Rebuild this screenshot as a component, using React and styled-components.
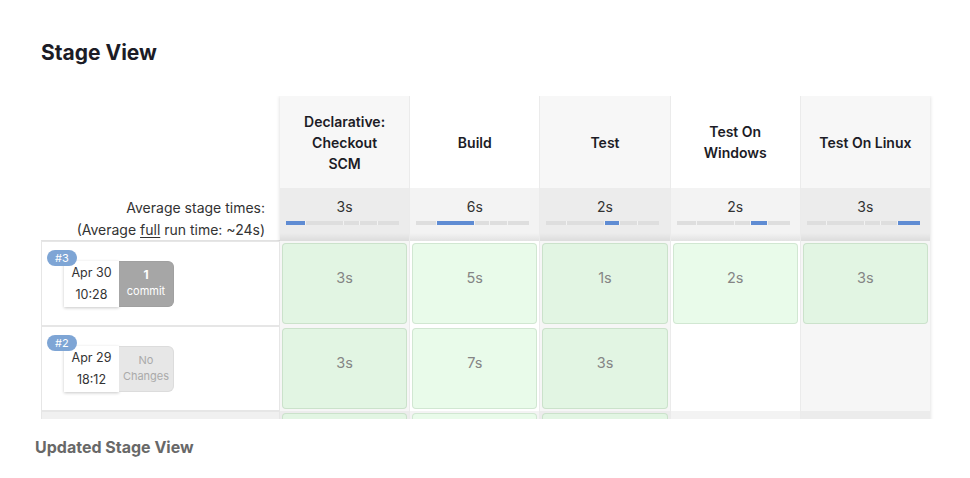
import React from "react";
import styled, { createGlobalStyle } from "styled-components";

const GlobalStyle = createGlobalStyle`
  body {
    margin: 0;
    background: #fff;
    font-family: Inter, "Noto Sans", sans-serif;
    color: #333;
  }
`;

const Page = styled.div`
  padding: 40px 0 0 35px;
`;

const Title = styled.h1`
  margin: 0 0 0 6px;
  font-size: 21px;
  font-weight: 700;
  line-height: 25px;
  color: #1c1c26;
`;

const Clip = styled.div`
  margin: 31px 0 0 6px;
  width: 900px;
  height: 323px;
  overflow: hidden;
`;

const Table = styled.div`
  display: flex;
`;

const LeftCol = styled.div`
  width: 239px;
  display: flex;
  flex-direction: column;
`;

const LeftHead = styled.div`
  height: 92px;
`;

const AvgLabel = styled.div`
  height: 53px;
  box-sizing: border-box;
  border-bottom: 1px solid #e2e2e2;
  padding: 9px 15px 0 0;
  text-align: right;
  font-size: 14px;
  line-height: 21.5px;
  color: #333;

  u {
    text-underline-offset: 2px;
  }
`;

const BuildRow = styled.div`
  position: relative;
  height: 85px;
  box-sizing: border-box;
  border: 1px solid #e6e6e6;
  background: ${(p) => (p.$shade ? "#f0f0f0" : "#fff")};
  padding: 19px 0 0 22px;
`;

const Badge = styled.span`
  position: absolute;
  top: 8px;
  left: 5px;
  z-index: 1;
  height: 16px;
  padding: 0 8px;
  border-radius: 8px;
  background: #7ea5d5;
  color: #fff;
  font-size: 11px;
  line-height: 16px;
`;

const Changeset = styled.div`
  display: flex;
`;

const DateBox = styled.div`
  width: 55px;
  height: 46px;
  box-sizing: border-box;
  padding-top: 1px;
  background: #fff;
  box-shadow: 0 1px 3px rgba(0, 0, 0, 0.22);
  text-align: center;
  font-size: 12.5px;
  line-height: 22px;
  color: #333;
`;

const CommitBox = styled.div`
  width: 55px;
  height: 46px;
  box-sizing: border-box;
  padding-top: 5px;
  border-radius: 0 6px 6px 0;
  background: ${(p) => (p.$empty ? "#e7e7e7" : "#a6a6a6")};
  border: 1px solid ${(p) => (p.$empty ? "#dcdcdc" : "#a0a0a0")};
  border-left: none;
  color: ${(p) => (p.$empty ? "#aaa" : "#fff")};
  text-align: center;
  font-size: 11px;
  line-height: 16px;

  b {
    font-weight: 700;
    font-size: 12px;
  }
`;

const StagePanel = styled.div`
  width: 650px;
  display: grid;
  grid-template-columns: repeat(5, 1fr);
  grid-template-rows: 92px 53px repeat(3, 85px);
  column-gap: 1px;
  background: #ebebeb;
  box-shadow: 0 0 4px rgba(0, 0, 0, 0.16);
`;

const StageName = styled.div`
  display: flex;
  align-items: center;
  justify-content: center;
  padding: 0 17px;
  background: ${(p) => (p.$alt ? "#fff" : "#f7f7f7")};
  text-align: center;
  font-size: 14px;
  font-weight: 600;
  line-height: 21px;
  color: #1c1c26;
`;

const AvgCell = styled.div`
  box-sizing: border-box;
  padding-top: 10px;
  background: ${(p) =>
    p.$alt
      ? "linear-gradient(to bottom, #f3f3f3 85%, #e2e2e2 100%)"
      : "linear-gradient(to bottom, #ececec 85%, #dcdcdc 100%)"};
  text-align: center;
  font-size: 14px;
  line-height: 18px;
  color: #333;
`;

const Bar = styled.div`
  display: flex;
  gap: 1px;
  width: 113px;
  height: 4px;
  margin: 5px 0 0 6px;
  background: #f2f2f2;
`;

const Segment = styled.div`
  flex: ${(p) => p.$w} 0 0;
  background: ${(p) => (p.$on ? "#5f8cd3" : "#dedede")};
`;

const StageCell = styled.div`
  padding: 2px;
  background: ${(p) =>
    p.$shade ? (p.$alt ? "#f3f3f3" : "#ececec") : p.$alt ? "#fff" : "#f6f6f6"};
`;

const Result = styled.div`
  height: 81px;
  box-sizing: border-box;
  padding-top: 25px;
  border-radius: 4px;
  border: 1px solid rgba(0, 60, 0, 0.1);
  background: ${(p) => (p.$alt ? "#e9fbea" : "#e2f5e3")};
  text-align: center;
  font-size: 14.5px;
  line-height: 18px;
  color: #858585;
`;

const Caption = styled.h2`
  margin: 19px 0 0;
  font-size: 16px;
  font-weight: 700;
  line-height: 19px;
  color: #686868;
`;

const stages = ["Declarative: Checkout SCM", "Build", "Test", "Test On Windows", "Test On Linux"];
const averages = ["3s", "6s", "2s", "2s", "3s"];
const shares = [20, 38, 15, 17, 22];

// the third build is cut off by the frame, only its top edge shows
const builds = [
  { id: "#3", date: "Apr 30", time: "10:28", commits: 1, times: ["3s", "5s", "1s", "2s", "3s"] },
  { id: "#2", date: "Apr 29", time: "18:12", commits: 0, times: ["3s", "7s", "3s", null, null] },
  { id: "#1", hidden: true, times: ["", "", "", null, null], shade: true },
];

export default function App() {
  return (
    <>
      <GlobalStyle />
      <Page>
        <Title>Stage View</Title>
        <Clip>
          <Table>
            <LeftCol>
              <LeftHead />
              <AvgLabel>
                Average stage times:
                <br />
                (Average <u>full</u> run time: ~24s)
              </AvgLabel>
              {builds.map((b) => (
                <BuildRow key={b.id} $shade={b.shade}>
                  {!b.hidden && (
                    <>
                      <Badge>{b.id}</Badge>
                      <Changeset>
                        <DateBox>
                          {b.date}
                          <br />
                          {b.time}
                        </DateBox>
                        <CommitBox $empty={!b.commits}>
                          {b.commits ? (
                            <>
                              <b>{b.commits}</b>
                              <br />
                              commit
                            </>
                          ) : (
                            <>
                              No
                              <br />
                              Changes
                            </>
                          )}
                        </CommitBox>
                      </Changeset>
                    </>
                  )}
                </BuildRow>
              ))}
            </LeftCol>
            <StagePanel>
              {stages.map((s, i) => (
                <StageName key={s} $alt={i % 2 === 1}>
                  {s}
                </StageName>
              ))}
              {averages.map((a, i) => (
                <AvgCell key={i} $alt={i % 2 === 1}>
                  {a}
                  <Bar>
                    {shares.map((w, j) => (
                      <Segment key={j} $w={w} $on={j === i} />
                    ))}
                  </Bar>
                </AvgCell>
              ))}
              {builds.map((b) =>
                b.times.map((t, i) => (
                  <StageCell key={b.id + i} $alt={i % 2 === 1} $shade={b.shade}>
                    {t !== null && <Result $alt={i % 2 === 1}>{t}</Result>}
                  </StageCell>
                ))
              )}
            </StagePanel>
          </Table>
        </Clip>
        <Caption>Updated Stage View</Caption>
      </Page>
    </>
  );
}
